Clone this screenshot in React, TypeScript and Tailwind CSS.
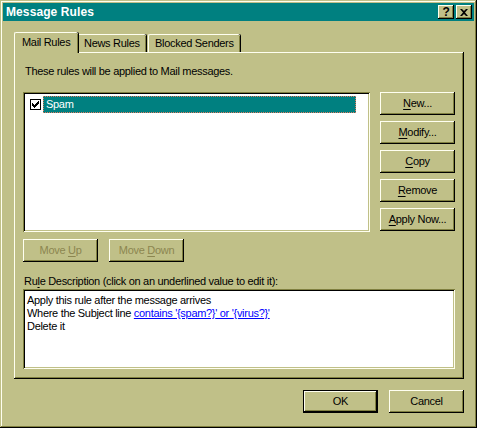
import React from "react";

const raised =
  "shadow-[inset_-1px_-1px_#000,inset_1px_1px_#fffff0,inset_-2px_-2px_#808040,inset_2px_2px_#c0c088]";
const sunken =
  "shadow-[inset_1px_1px_#808040,inset_-1px_-1px_#fffff0,inset_2px_2px_#000,inset_-2px_-2px_#c0c088]";

const Btn = ({
  children,
  disabled,
  isDefault,
}: {
  children: React.ReactNode;
  disabled?: boolean;
  isDefault?: boolean;
}) => (
  <div
    className={`w-[75px] h-[23px] flex items-center justify-center bg-[#c0c088] ${
      isDefault
        ? "border border-black shadow-[inset_-1px_-1px_#000,inset_1px_1px_#fffff0,inset_-2px_-2px_#808040]"
        : raised
    } ${disabled ? "text-[#8c8650]" : "text-black"}`}
  >
    {children}
  </div>
);

const U = ({ children }: { children: React.ReactNode }) => (
  <span className="underline underline-offset-2">{children}</span>
);

export default function App() {
  return (
    <div className="w-[477px] h-[428px] bg-[#c0c088] p-[3px] flex flex-col font-['Liberation_Sans',Arial,sans-serif] text-[11px] leading-[13px] tracking-[-0.3px] text-black shadow-[inset_-1px_-1px_#000,inset_1px_1px_#c0c088,inset_-2px_-2px_#808040,inset_2px_2px_#fffff0]">
      {/* Title bar */}
      <div className="h-[18px] bg-[#008080] flex items-center justify-between pl-[3px] pr-[2px]">
        <span className="text-white font-bold text-[12px] tracking-[0.1px]">Message Rules</span>
        <div className="flex gap-[2px]">
          <div className={`w-[16px] h-[14px] bg-[#c0c088] flex items-center justify-center font-bold text-[12px] ${raised}`}>
            ?
          </div>
          <div className={`w-[16px] h-[14px] bg-[#c0c088] flex items-center justify-center ${raised}`}>
            <svg width="8" height="7" viewBox="0 0 8 7">
              <path d="M0 0h2l2 2 2-2h2L5 3.5 8 7H6L4 5 2 7H0l3-3.5z" fill="#000" />
            </svg>
          </div>
        </div>
      </div>

      <div className="pl-[11px] pr-[10px] flex flex-col">
        {/* Tabs */}
        <div className="mt-[11px] h-[20px] flex items-end">
          <div className="relative z-10 -mb-px h-[21px] w-[64px] bg-[#c0c088] border-l border-t border-[#fffff0] rounded-tl-[2px] rounded-tr-[2px] shadow-[inset_-1px_0_#808040,1px_0_#000] flex items-start pt-[3px] pl-[7px]">
            Mail Rules
          </div>
          <div className="h-[18px] w-[67px] ml-[1px] bg-[#c0c088] border-t border-[#fffff0] rounded-tr-[2px] shadow-[inset_-1px_0_#808040,1px_0_#000] flex items-start pt-[2px] pl-[5px]">
            News Rules
          </div>
          <div className="h-[18px] w-[92px] ml-[2px] bg-[#c0c088] border-l border-t border-[#fffff0] rounded-tl-[2px] rounded-tr-[2px] shadow-[inset_-1px_0_#808040,1px_0_#000] flex items-start pt-[2px] pl-[6px]">
            Blocked Senders
          </div>
        </div>

        {/* Panel */}
        <div className="h-[327px] w-[450px] bg-[#c0c088] pl-[9px] pt-[13px] shadow-[inset_-1px_-1px_#000,inset_1px_1px_#fffff0,inset_-2px_-2px_#808040]">
          <div className="h-[13px] pl-[2px]">These rules will be applied to Mail messages.</div>

          <div className="mt-[14px] flex gap-[10px]">
            <div className={`w-[347px] h-[140px] bg-white p-[2px] ${sunken}`}>
              <div className="mt-[2px] flex items-center h-[17px]">
                <div className="ml-[5px] w-[11px] h-[11px] border border-black bg-white flex items-center justify-center">
                  <svg width="7" height="7" viewBox="0 0 7 7">
                    <path d="M0 2h1v1h1v1h1V3h1V2h1V1h1V0h1v3H6v1H5v1H4v1H3v1H2V6H1V5H0z" fill="#000" />
                  </svg>
                </div>
                <div className="ml-[2px] w-[313px] h-[17px] bg-[#008080] border border-dotted border-[#e07a5f] text-white pl-[2px] flex items-center">
                  Spam
                </div>
              </div>
            </div>
            <div className="flex flex-col gap-[6px]">
              <Btn>
                <U>N</U>ew...
              </Btn>
              <Btn>
                <U>M</U>odify...
              </Btn>
              <Btn>
                <U>C</U>opy
              </Btn>
              <Btn>
                <U>R</U>emove
              </Btn>
              <Btn>
                <U>A</U>pply Now...
              </Btn>
            </div>
          </div>

          <div className="mt-[7px] flex gap-[11px]">
            <Btn disabled>
              Move&nbsp;<U>U</U>p
            </Btn>
            <Btn disabled>
              Move&nbsp;<U>D</U>own
            </Btn>
          </div>

          <div className="mt-[13px] h-[13px] pl-[1px]">
            Ru<U>l</U>e Description (click on an underlined value to edit it):
          </div>

          <div className={`mt-[1px] w-[432px] h-[80px] bg-white pl-[4px] pt-[5px] ${sunken}`}>
            <div>Apply this rule after the message arrives</div>
            <div>
              Where the Subject line{" "}
              <span className="text-[#0000ff] underline underline-offset-1">
                contains &#39;{"{spam?}"}&#39; or &#39;{"{virus?}"}&#39;
              </span>
            </div>
            <div>Delete it</div>
          </div>
        </div>

        {/* Bottom buttons */}
        <div className="mt-[11px] flex justify-end gap-[11px]">
          <Btn isDefault>OK</Btn>
          <Btn>Cancel</Btn>
        </div>
      </div>
    </div>
  );
}
